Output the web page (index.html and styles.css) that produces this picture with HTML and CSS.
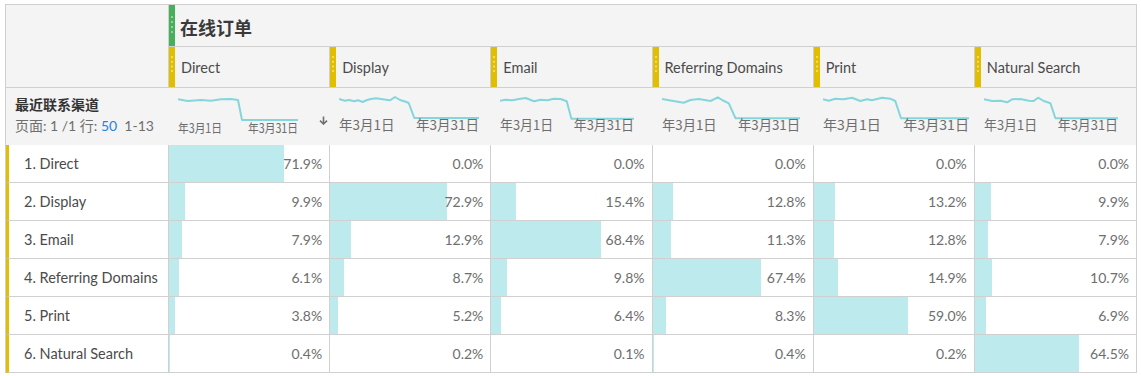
FILE: index.html
```html
<!DOCTYPE html>
<html lang="zh">
<head>
<meta charset="utf-8">
<title>在线订单 - 最近联系渠道</title>
<link rel="stylesheet" href="styles.css">
</head>
<body>
<div class="table">
  <div class="corner"></div>
  <div class="metric"><span class="grip green"></span><span class="metric-title">在线订单</span></div>

  <div class="colhead"><span class="grip yellow"></span><span class="colname">Direct</span></div>
  <div class="colhead"><span class="grip yellow"></span><span class="colname">Display</span></div>
  <div class="colhead"><span class="grip yellow"></span><span class="colname">Email</span></div>
  <div class="colhead"><span class="grip yellow"></span><span class="colname">Referring Domains</span></div>
  <div class="colhead"><span class="grip yellow"></span><span class="colname">Print</span></div>
  <div class="colhead last"><span class="grip yellow"></span><span class="colname">Natural Search</span></div>

  <div class="sumleft">
    <div class="dim-title">最近联系渠道</div>
    <div class="pager">页面: 1 /1 行: <span class="blue">50</span>&nbsp; 1-13</div>
  </div>
  <div class="spark">
    <svg width="120" height="46" viewBox="0 0 140 46" preserveAspectRatio="none">
      <polyline class="sl" points="0,5.3 11.3,7 26.8,6 38.5,6.7 50.2,5.3 61.8,5 70,6 74.7,26 140,26"/>
      <text class="sd small" x="0" y="39">年3月1日</text>
      <text class="sd small" x="140" y="39" text-anchor="end">年3月31日</text>
    </svg>
    <svg class="sort" width="9" height="9" viewBox="0 0 9 9"><path d="M4.5 0.5V8M1 4.6L4.5 8L8 4.6" fill="none" stroke="#707070" stroke-width="1.6"/></svg>
  </div>
  <div class="spark">
    <svg width="140" height="46" viewBox="0 0 140 46" preserveAspectRatio="none">
      <polyline class="sl" points="0,5 5.7,6.7 10,6 15.3,7.3 19,6.3 23.7,8 28,6 32,5 37,4.3 42,5 47,5.7 51,6.3 56,3 61,6 66,7.5 69.7,9 75.3,24 140,24"/>
      <text class="sd" x="0" y="36">年3月1日</text>
      <text class="sd" x="140" y="36" text-anchor="end">年3月31日</text>
    </svg>
  </div>
  <div class="spark">
    <svg width="134" height="46" viewBox="0 0 140 46" preserveAspectRatio="none">
      <polyline class="sl" points="0,6.7 6,5.7 12.9,6.3 19.9,5 26.8,4 35.5,7.3 42.5,5.7 49.5,6.3 56.4,4.7 63.4,5 69.7,7.3 74.6,24.7 140,24.7"/>
      <text class="sd" x="0" y="36">年3月1日</text>
      <text class="sd" x="140" y="36" text-anchor="end">年3月31日</text>
    </svg>
  </div>
  <div class="spark">
    <svg width="138" height="46" viewBox="0 0 140 46" preserveAspectRatio="none">
      <polyline class="sl" points="0,5 10.1,6.7 22,8.7 28.8,6 37.3,5 49.2,7 56.6,3.3 61,6 67.8,9.3 74.6,24.3 140,24.3"/>
      <text class="sd" x="0" y="36">年3月1日</text>
      <text class="sd" x="140" y="36" text-anchor="end">年3月31日</text>
    </svg>
  </div>
  <div class="spark">
    <svg width="146" height="46" viewBox="0 0 140 46" preserveAspectRatio="none">
      <polyline class="sl" points="0,5.3 5.4,6.7 11.8,4.7 19.8,5.3 27.8,3.7 35.8,7 42.2,5.3 47,6.3 56.5,3.7 64.5,4.7 69.3,7 74.8,24.3 140,24.3"/>
      <text class="sd" x="0" y="36">年3月1日</text>
      <text class="sd" x="140" y="36" text-anchor="end">年3月31日</text>
    </svg>
  </div>
  <div class="spark">
    <svg width="134" height="46" viewBox="0 0 140 46" preserveAspectRatio="none">
      <polyline class="sl" points="0,5.3 8.4,7 17.1,6.7 24.1,8.3 29.3,5.3 38,5 46.7,6.7 51.9,7 56.5,3.7 62.4,7 69.4,9.3 74.6,24.3 140,24.3"/>
      <text class="sd" x="0" y="36">年3月1日</text>
      <text class="sd" x="140" y="36" text-anchor="end">年3月31日</text>
    </svg>
  </div>

  <div class="row">
    <div class="label">1. Direct</div>
    <div class="val" style="--p:71.9%">71.9%</div>
    <div class="val" style="--p:0%">0.0%</div>
    <div class="val" style="--p:0%">0.0%</div>
    <div class="val" style="--p:0%">0.0%</div>
    <div class="val" style="--p:0%">0.0%</div>
    <div class="val" style="--p:0%">0.0%</div>
  </div>
  <div class="row">
    <div class="label">2. Display</div>
    <div class="val" style="--p:9.9%">9.9%</div>
    <div class="val" style="--p:72.9%">72.9%</div>
    <div class="val" style="--p:15.4%">15.4%</div>
    <div class="val" style="--p:12.8%">12.8%</div>
    <div class="val" style="--p:13.2%">13.2%</div>
    <div class="val" style="--p:9.9%">9.9%</div>
  </div>
  <div class="row">
    <div class="label">3. Email</div>
    <div class="val" style="--p:7.9%">7.9%</div>
    <div class="val" style="--p:12.9%">12.9%</div>
    <div class="val" style="--p:68.4%">68.4%</div>
    <div class="val" style="--p:11.3%">11.3%</div>
    <div class="val" style="--p:12.8%">12.8%</div>
    <div class="val" style="--p:7.9%">7.9%</div>
  </div>
  <div class="row">
    <div class="label">4. Referring Domains</div>
    <div class="val" style="--p:6.1%">6.1%</div>
    <div class="val" style="--p:8.7%">8.7%</div>
    <div class="val" style="--p:9.8%">9.8%</div>
    <div class="val" style="--p:67.4%">67.4%</div>
    <div class="val" style="--p:14.9%">14.9%</div>
    <div class="val" style="--p:10.7%">10.7%</div>
  </div>
  <div class="row">
    <div class="label">5. Print</div>
    <div class="val" style="--p:3.8%">3.8%</div>
    <div class="val" style="--p:5.2%">5.2%</div>
    <div class="val" style="--p:6.4%">6.4%</div>
    <div class="val" style="--p:8.3%">8.3%</div>
    <div class="val" style="--p:59%">59.0%</div>
    <div class="val" style="--p:6.9%">6.9%</div>
  </div>
  <div class="row">
    <div class="label">6. Natural Search</div>
    <div class="val" style="--p:0.4%">0.4%</div>
    <div class="val" style="--p:0.2%">0.2%</div>
    <div class="val" style="--p:0.1%">0.1%</div>
    <div class="val" style="--p:0.4%">0.4%</div>
    <div class="val" style="--p:0.2%">0.2%</div>
    <div class="val" style="--p:64.5%">64.5%</div>
  </div>
</div>
</body>
</html>
```
FILE: styles.css
```css
* { box-sizing: border-box; }

body {
  margin: 0;
  padding: 4px 0 0 5px;
  background: #fff;
  font-family: Lato, "Noto Sans CJK SC", sans-serif;
  color: #4b4b4b;
}

.table {
  display: grid;
  width: 1132px;
  grid-template-columns: 163px repeat(6, 1fr);
  border: 1px solid #d0d0d0;
  border-bottom: 0;
}

.corner {
  grid-row: 1 / 3;
  background: #f4f4f4;
  border-right: 1px solid #d0d0d0;
  border-bottom: 1px solid #d0d0d0;
}

.metric {
  grid-column: 2 / 8;
  height: 42px;
  display: flex;
  align-items: stretch;
  background: #f4f4f4;
  border-bottom: 1px solid #d0d0d0;
}

.metric-title {
  display: flex;
  align-items: center;
  padding-left: 5px;
  padding-top: 2px;
  font-family: "Noto Sans CJK SC", sans-serif;
  font-weight: 700;
  font-size: 18px;
  color: #3a3a3a;
}

.grip {
  width: 6px;
  flex: none;
  position: relative;
}
.grip::before {
  content: "";
  position: absolute;
  left: 2px;
  width: 2px;
  height: 2px;
  border-radius: 50%;
  background: rgba(255, 255, 255, 0.55);
}
.grip.green { background: #46b05a; }
.grip.green::before {
  top: 11px;
  box-shadow: 0 5px rgba(255,255,255,.55), 0 10px rgba(255,255,255,.55), 0 15px rgba(255,255,255,.55);
}
.grip.yellow { background: #e2be00; }
.grip.yellow::before {
  top: 9px;
  box-shadow: 0 4.7px rgba(255,255,255,.55), 0 9.4px rgba(255,255,255,.55), 0 14px rgba(255,255,255,.55);
}

.colhead {
  height: 41px;
  display: flex;
  align-items: stretch;
  background: #f4f4f4;
  border-right: 1px solid #d0d0d0;
  border-bottom: 1px solid #d0d0d0;
}
.colhead.last { border-right: 0; }

.colname {
  display: flex;
  align-items: center;
  padding-left: 6px;
  padding-top: 1px;
  font-size: 14.5px;
  color: #4b4b4b;
}

.sumleft {
  height: 57px;
  background: #f4f4f4;
  padding: 6px 0 0 9px;
}
.dim-title {
  font-family: "Noto Sans CJK SC", sans-serif;
  font-weight: 700;
  font-size: 14px;
  line-height: 20px;
  color: #333;
}
.pager {
  margin-top: 2px;
  font-size: 14px;
  line-height: 20px;
  color: #6e6e6e;
  white-space: nowrap;
}
.blue { color: #2680eb; }

.spark {
  display: flex;
  align-items: flex-start;
  background: #f4f4f4;
  padding: 6px 0 0 9px;
}
.spark svg { display: block; flex: none; }
.sort {
  margin: 22px 2px 0 auto;
}
.sl {
  fill: none;
  stroke: #84d6db;
  stroke-width: 2;
  stroke-linejoin: round;
  vector-effect: non-scaling-stroke;
}
.sd {
  font-family: "Noto Sans CJK SC", sans-serif;
  font-size: 13.5px;
  fill: #6e6e6e;
}
.sd.small { font-size: 12.5px; }

.row { display: contents; }

.label {
  height: 38px;
  display: flex;
  align-items: center;
  padding-left: 15px;
  font-size: 14.5px;
  color: #4b4b4b;
  background: #fff;
  border-left: 3px solid #e2be00;
  border-right: 1px solid #d0d0d0;
  border-bottom: 1px solid #d0d0d0;
  white-space: nowrap;
}

.val {
  height: 38px;
  display: flex;
  align-items: center;
  justify-content: flex-end;
  padding-right: 7px;
  font-size: 14px;
  color: #6e6e6e;
  background: linear-gradient(to right, #bdebed var(--p), #fff var(--p));
  border-right: 1px solid #d0d0d0;
  border-bottom: 1px solid #d0d0d0;
}
.row .val:last-child { border-right: 0; }
```
